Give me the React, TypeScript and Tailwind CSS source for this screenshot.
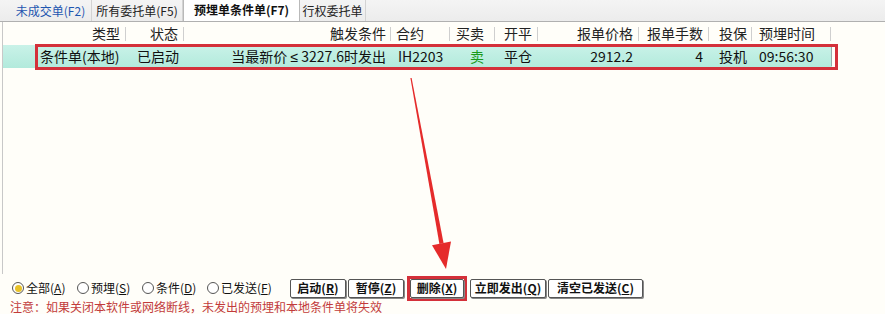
import React from 'react';

const cjk = { fontFamily: '"Noto Sans CJK SC", "Noto Sans", sans-serif' };
const song = { fontFamily: '"Noto Sans CJK SC", "DejaVu Sans", sans-serif' };

const columns = [
  { w: 'w-[30px]', head: '', hAlign: '', data: '', dAlign: '' },
  { w: 'w-[93px]', head: '类型', hAlign: 'justify-end pr-[6px]', data: '条件单(本地)', dAlign: 'justify-start pl-[7px]' },
  { w: 'w-[58px]', head: '状态', hAlign: 'justify-end pr-[6px]', data: '已启动', dAlign: 'justify-end pr-[5px]' },
  {
    w: 'w-[207px]',
    head: '触发条件',
    hAlign: 'justify-end pr-[5px]',
    data: (
      <span className="whitespace-pre">
        {'当最新价 '}
        <span style={{ fontFamily: '"Noto Sans", sans-serif' }}>≤</span>
        {' 3227.6时发出'}
      </span>
    ),
    dAlign: 'justify-end pr-[5px]',
  },
  { w: 'w-[59px]', head: '合约', hAlign: 'justify-start pl-[5px]', data: 'IH2203', dAlign: 'justify-start pl-[7px]' },
  { w: 'w-[45px]', head: '买卖', hAlign: 'justify-start pl-[6px]', data: '卖', dAlign: 'justify-end pr-[11px] text-[#1a9a1a]' },
  { w: 'w-[43px]', head: '开平', hAlign: 'justify-start pl-[9px]', data: '平仓', dAlign: 'justify-start pl-[9px]' },
  { w: 'w-[101px]', head: '报单价格', hAlign: 'justify-end pr-[6px]', data: '2912.2', dAlign: 'justify-end pr-[6px]' },
  { w: 'w-[70px]', head: '报单手数', hAlign: 'justify-end pr-[6px]', data: '4', dAlign: 'justify-end pr-[6px]' },
  { w: 'w-[43px]', head: '投保', hAlign: 'justify-start pl-[10px]', data: '投机', dAlign: 'justify-start pl-[10px]' },
  { w: 'w-[79px]', head: '预埋时间', hAlign: 'justify-start pl-[7px]', data: '09:56:30', dAlign: 'justify-start pl-[7px]' },
];

const tabs = [
  { label: '未成交单(F2)', w: 'w-[82px]', cls: 'text-[#1e56b0]' },
  { label: '所有委托单(F5)', w: 'w-[91px]', cls: 'text-[#222]' },
  { label: '预埋单条件单(F7)', w: 'w-[117px]', cls: 'text-[#111] font-bold bg-white h-[23px] -mt-[1px] border-t border-x border-[#b9b9b9]', active: true },
  { label: '行权委托单', w: 'w-[66px]', cls: 'text-[#222]' },
];

const radios = [
  { label: '全部', key: 'A', checked: true, w: 'w-[65px]' },
  { label: '预埋', key: 'S', w: 'w-[65px]' },
  { label: '条件', key: 'D', w: 'w-[65px]' },
  { label: '已发送', key: 'F', w: 'w-[80px]' },
];

const buttons = [
  { label: '启动', key: 'R', w: 'w-[56px]' },
  { label: '暂停', key: 'Z', w: 'w-[56px]' },
  { label: '删除', key: 'X', w: 'w-[54px]', marked: true },
  { label: '立即发出', key: 'Q', w: 'w-[76px]' },
  { label: '清空已发送', key: 'C', w: 'w-[95px]' },
];

function Arrow() {
  return (
    <svg className="absolute left-0 top-0 pointer-events-none" width="885" height="314">
      <polygon points="410.4,78 411.6,78 443.6,243.2 439.4,244" fill="#e52b2b" />
      <polygon points="446,269 451,241.6 432,245.2" fill="#e52b2b" />
    </svg>
  );
}

export default function App() {
  return (
    <div className="relative w-[885px] h-[314px] overflow-hidden bg-[#fffef9] text-[#111]" style={cjk}>
      {/* tab strip */}
      <div className="h-[22px] flex items-end pl-[10px] bg-gradient-to-b from-[#f4f4f4] to-[#ececec] border-b border-[#b0b0b0]">
        {tabs.map((t) => (
          <div
            key={t.label}
            className={`${t.w} flex items-center justify-center whitespace-nowrap text-[12px] leading-none ${t.active ? '' : 'h-[21px] border-r border-[#d3d3d3]'} ${t.cls}`}
          >
            {t.label}
          </div>
        ))}
      </div>

      <div className="flex h-[252px]">
        <div className="w-[3px] border-r border-[#c8c8c8]" />
        <div className="flex-1 flex flex-col">
          {/* header */}
          <div className="flex h-[22px] text-[14px] text-[#222]">
            {columns.map((c, i) => (
              <div key={i} className={`${c.w} relative flex items-center whitespace-nowrap ${c.hAlign}`}>
                {c.head}
                {i > 0 && <span className="absolute right-0 top-[5px] h-[14px] w-px bg-[#cfcfcf]" />}
              </div>
            ))}
          </div>
          {/* selected row */}
          <div className="flex h-[23px] mt-[1px] text-[14px] bg-gradient-to-b from-[#c9f2e8] to-[#b2eadc] w-[829px]">
            {columns.map((c, i) => (
              <div key={i} className={`${c.w} flex items-center whitespace-nowrap ${c.dAlign}`}>
                {c.data}
              </div>
            ))}
            <span className="w-px bg-[#9aa] my-[2px]" />
          </div>
        </div>
      </div>

      {/* bottom controls */}
      <div className="h-[40px] pl-[12px] pt-[4px]" style={song}>
        <div className="flex items-center h-[20px]">
          {radios.map((r) => (
            <div key={r.label} className={`${r.w} flex items-center whitespace-nowrap text-[12px] text-[#111]`}>
              <span className="w-[12px] h-[12px] rounded-full border border-[#555] bg-white mr-[2px] flex items-center justify-center">
                {r.checked && <span className="w-[7px] h-[7px] rounded-full bg-[#e8c22a]" />}
              </span>
              {r.label}(<span className="underline">{r.key}</span>)
            </div>
          ))}
          <div className="flex items-center ml-[3px] gap-[2px]">
            {buttons.map((b) => (
              <div key={b.label} className={b.marked ? 'border-[3px] border-[#d4303a] mx-[1px]' : ''}>
                <div
                  className={`${b.w} h-[19px] flex items-center justify-center whitespace-nowrap bg-white border border-[#555] rounded-[2px] shadow-[1px_1px_0_#888] text-[12px] font-bold leading-none`}
                >
                  {b.label}(<span className="underline">{b.key}</span>)
                </div>
              </div>
            ))}
          </div>
        </div>
        <div className="text-[12px] text-[#c23b3b] leading-[14px] mt-[2px] -ml-[2px]">
          注意：如果关闭本软件或网络断线，未发出的预埋和本地条件单将失效
        </div>
      </div>

      {/* annotation box around the row */}
      <div className="absolute left-[35px] top-[44px] w-[803px] h-[26px] border-[3px] border-[#d4303a] pointer-events-none" />
      <Arrow />
    </div>
  );
}
